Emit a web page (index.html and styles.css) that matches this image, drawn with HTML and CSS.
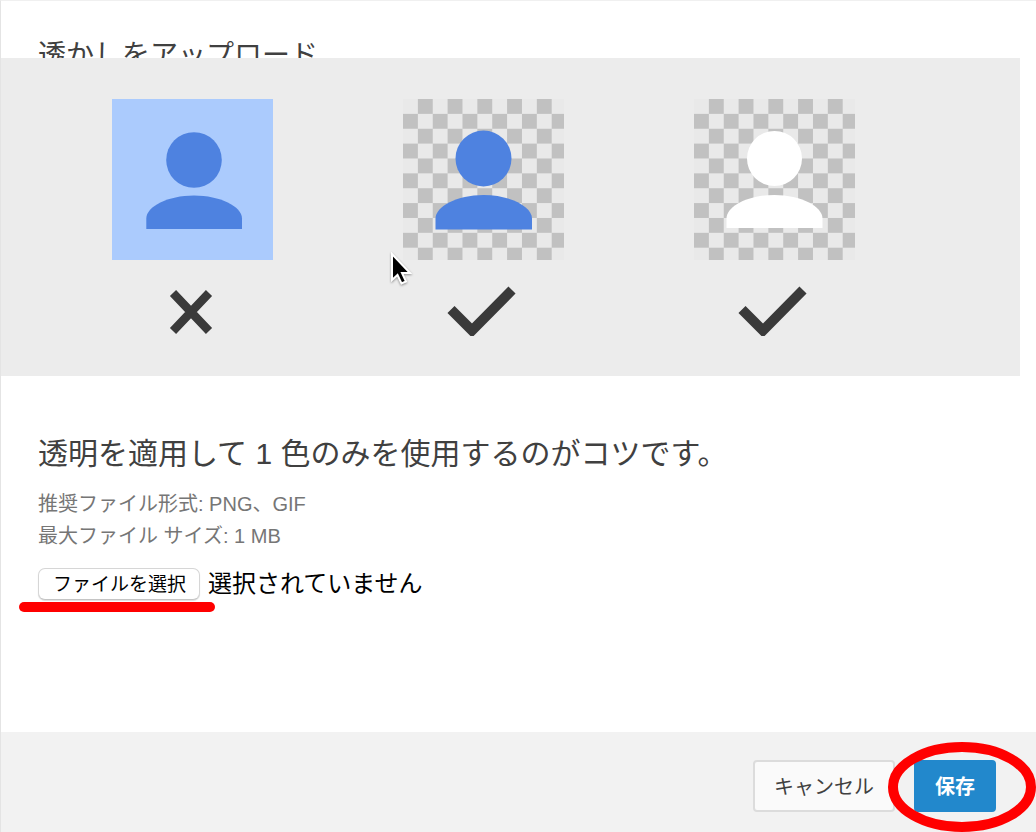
FILE: index.html
```html
<!DOCTYPE html>
<html lang="ja">
<head>
<meta charset="utf-8">
<meta name="viewport" content="width=device-width, initial-scale=1">
<title>透かしをアップロード</title>
<link rel="stylesheet" href="styles.css">
</head>
<body>
<div class="dialog">
  <main class="content">
    <h1 class="title">透かしをアップロード</h1>

    <div class="examples">
      <figure class="example">
        <svg class="tile" viewBox="0 0 161 161" role="img" aria-label="背景が不透明な画像">
          <rect y="0.500" width="161" height="161" fill="#abcbfd"/>
          <g fill="#4e82e0">
            <circle cx="82" cy="61.500" r="27.800"/>
            <path d="M34.300 130.500V120C34.300 108 56 97 82 97S130 108 130 120V130.500Z"/>
          </g>
        </svg>
        <svg class="mark" viewBox="0 0 161 76" role="img" aria-label="不可">
          <path d="M61 33L97 71M97 33L61 71" stroke="#3a3a3a" stroke-width="8.500" fill="none"/>
        </svg>
      </figure>
      <figure class="example">
        <svg class="tile" viewBox="0 0 161 161" role="img" aria-label="背景が透明な青い画像">
          <defs>
            <pattern id="checker" y="0.500" width="29.740" height="29.740" patternUnits="userSpaceOnUse">
              <rect width="29.740" height="29.740" fill="#e9e9e9"/>
              <path d="M14.870 0H29.740V14.870H14.870ZM0 14.870H14.870V29.740H0Z" fill="#c1c1c1"/>
            </pattern>
          </defs>
          <rect y="0.500" width="161" height="161" fill="url(#checker)"/>
          <g fill="#4e82e0">
            <circle cx="80.500" cy="60" r="28"/>
            <path d="M32.500 131V120C32.500 108 54 96.500 80.500 96.500S129 108 129 120V131Z"/>
          </g>
        </svg>
        <svg class="mark" viewBox="0 0 161 76" role="img" aria-label="可">
          <path d="M48 49.500L69 70.500L109 30" stroke="#3a3a3a" stroke-width="10" fill="none"/>
        </svg>
      </figure>
      <figure class="example">
        <svg class="tile" viewBox="0 0 161 161" role="img" aria-label="背景が透明な白い画像">
          <rect y="0.500" width="161" height="161" fill="url(#checker)"/>
          <g fill="#fff">
            <circle cx="80.500" cy="60" r="27.500"/>
            <path d="M32.500 129.500V120C32.500 108 54 96.500 80.500 96.500S128.500 108 128.500 120V129.500Z"/>
          </g>
        </svg>
        <svg class="mark" viewBox="0 0 161 76" role="img" aria-label="可">
          <path d="M48 49.500L69 70.500L109 30" stroke="#3a3a3a" stroke-width="10" fill="none"/>
        </svg>
      </figure>
      <svg class="cursor" viewBox="0 0 24 36" aria-hidden="true">
        <path d="M2 2V28L7.500 23L11.500 31.500L16 29.500L12 21H20Z" fill="#000" stroke="#fff" stroke-width="2"/>
      </svg>
    </div>

    <section class="details">
      <h2 class="tip">透明を適用して 1 色のみを使用するのがコツです。</h2>
      <p class="hint">推奨ファイル形式: PNG、GIF</p>
      <p class="hint">最大ファイル サイズ: 1 MB</p>
      <div class="picker">
        <input class="picker-input" type="file" id="watermark" accept="image/png,image/gif">
        <label class="picker-button" for="watermark">ファイルを選択</label>
        <span class="picker-status">選択されていません</span>
        <span class="underline"></span>
      </div>
    </section>
  </main>

  <footer class="footer">
    <button class="button" type="button">キャンセル</button>
    <div class="save-wrap">
      <button class="button primary" type="button">保存</button>
      <svg class="ring" viewBox="0 0 148 90" aria-hidden="true">
        <ellipse cx="74" cy="45" rx="69" ry="40" fill="none" stroke="#f00" stroke-width="10"/>
      </svg>
    </div>
  </footer>
</div>
</body>
</html>
```

FILE: styles.css
```css
* {
  box-sizing: border-box;
}

body {
  margin: 0;
  background: #fff;
  color: #404040;
  font-family: "Liberation Sans", "Noto Sans CJK JP", sans-serif;
}

.dialog {
  display: flex;
  flex-direction: column;
  min-height: 100vh;
  overflow: hidden;
  border-top: 1px solid #f0f0f0;
  border-left: 1px solid #e4e4e4;
}

.content {
  flex: 1;
}

.title,
.tip {
  margin: 0;
  font-weight: 400;
  line-height: 40px;
}

.title {
  padding: 35px 37px 0;
  font-size: 28px;
}

.tip {
  font-size: 30px;
}

.examples {
  position: relative;
  display: flex;
  gap: 130px;
  margin: -18px 16px 0 0;
  padding: 40px 111px;
  background: #ececec;
}

.example {
  display: flex;
  flex-direction: column;
  margin: 0;
}

.tile {
  width: 161px;
  height: 162px;
}

.mark {
  width: 161px;
  height: 76px;
}

.cursor {
  position: absolute;
  top: 194px;
  left: 389px;
  width: 24px;
  height: 36px;
  filter: drop-shadow(0 1px 1px #0006);
}

.details {
  padding: 58px 37px;
}

.hint {
  margin: 0;
  color: #767676;
  font-size: 20px;
  line-height: 32px;
}

.tip + .hint {
  margin-top: 14px;
}

.picker {
  position: relative;
  display: flex;
  align-items: center;
  gap: 8px;
  margin-top: 16px;
  color: #000;
}

.picker-input {
  position: absolute;
  width: 1px;
  height: 1px;
  opacity: 0;
}

.picker-button {
  padding: 2px 13px 0 14px;
  border: 1px solid #d6d6d6;
  border-bottom-color: #c4c4c4;
  border-radius: 7px;
  background: #fff;
  box-shadow: 0 1px 1px #0002;
  font-size: 19px;
  line-height: 28px;
}

.picker-status {
  font-size: 24px;
  line-height: 32px;
}

.underline {
  position: absolute;
  top: 34px;
  left: -19px;
  width: 196px;
  height: 10px;
  border-radius: 5px;
  background: #f00;
}

.footer {
  display: flex;
  justify-content: flex-end;
  gap: 19px;
  padding: 28px 40px 20px;
  background: #f2f2f2;
}

.button {
  height: 52px;
  padding: 2px 19px 0;
  border: 2px solid #dcdcdc;
  border-radius: 4px;
  background: #fafafa;
  color: #404040;
  font-family: inherit;
  font-size: 20px;
  line-height: 30px;
}

.primary {
  border-color: #2288cc;
  background: #2288cc;
  color: #fff;
  font-weight: 700;
}

.save-wrap {
  position: relative;
}

.ring {
  position: absolute;
  top: -18px;
  left: -26px;
  width: 148px;
  height: 90px;
}
```
